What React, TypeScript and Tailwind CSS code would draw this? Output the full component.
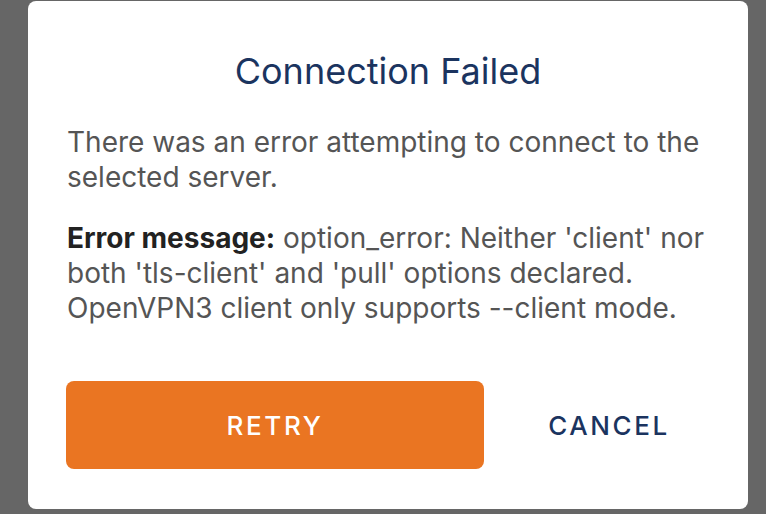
export default function App() {
  return (
    <div className="h-[514px] w-[766px] bg-[#666666] pl-[28px] pt-px font-['Inter',sans-serif]">
      <div className="flex h-[508px] w-[720px] flex-col rounded-lg bg-white px-[38px] pb-[40px] pt-[48px]">
        <h1 className="text-center text-[36px] leading-[44px] text-[#1b345f]">Connection Failed</h1>
        <p className="mt-[32px] px-px text-[28px] leading-[35px] text-[#555555]">
          There was an error attempting to connect to the selected server.
        </p>
        <p className="mt-[26px] px-px text-[28px] leading-[35px] text-[#555555]">
          <span className="font-bold text-[#222222]">Error message:</span> option_error: Neither 'client' nor both
          'tls-client' and 'pull' options declared. OpenVPN3 client only supports --client mode.
        </p>
        <div className="mt-auto flex gap-6">
          <button className="h-[88px] w-[418px] rounded-lg bg-[#ea7522] text-[26px] font-medium tracking-[0.1em] text-white">
            RETRY
          </button>
          <button className="flex-1 text-[26px] font-medium tracking-[0.1em] text-[#1b345f]">CANCEL</button>
        </div>
      </div>
    </div>
  );
}
